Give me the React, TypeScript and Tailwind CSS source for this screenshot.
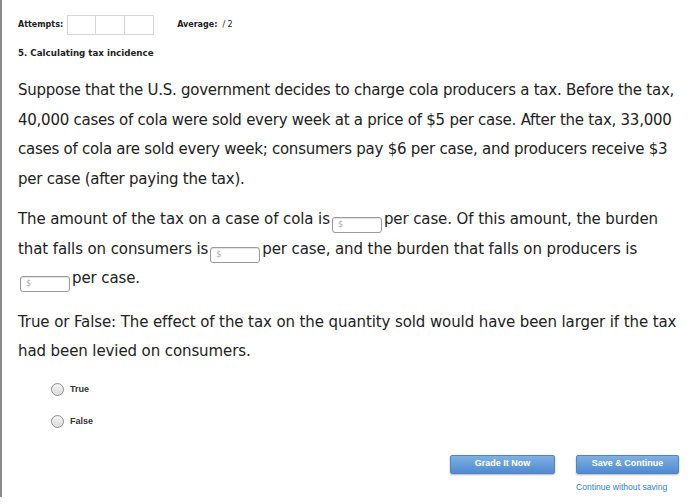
const Blank = () => (
  <span className="mx-[2px] inline-flex h-[16px] w-[50px] items-center rounded-[3px] border border-[#9a9a9a] bg-white pl-[5px] align-[-3px] text-[8px] leading-none tracking-normal text-[#aaa] shadow-[inset_0_1px_1px_rgba(0,0,0,0.12)]">
    $
  </span>
)

const Radio = ({ label }: { label: string }) => (
  <div className="flex items-center gap-[6px]">
    <span className="h-[13px] w-[13px] rounded-full border border-[#8c8c8c] bg-gradient-to-b from-[#f4f4f4] to-[#dcdcdc]" />
    <span className="font-['Liberation_Sans',sans-serif] text-[9px] font-bold text-[#333]">{label}</span>
  </div>
)

export default function App() {
  return (
    <div className="h-[504px] w-[700px] bg-white font-['DejaVu_Sans',sans-serif] text-[#222]">
      <div className="h-[497px] border-l-2 border-[#8a8a8a] pl-[16px] pr-[10px]">
        <div className="flex h-[46px] items-center pt-[3px] text-[8px] font-bold">
          <span>Attempts:</span>
          <div className="ml-[4px] flex">
            <div className="h-[20px] w-[29px] border border-[#d6d6d6]" />
            <div className="h-[20px] w-[29px] border border-l-0 border-[#d6d6d6]" />
            <div className="h-[20px] w-[29px] border border-l-0 border-[#d6d6d6]" />
          </div>
          <span className="ml-[23px]">Average:</span>
          <span className="ml-[5px] font-normal">/ 2</span>
        </div>
        <div className="text-[8.7px] font-bold leading-[14px]">5. Calculating tax incidence</div>

        <p className="mt-[16px] text-[15px] leading-[29.5px] tracking-[-0.25px]">
          Suppose that the U.S. government decides to charge cola producers a tax. Before the tax, 40,000 cases of cola
          were sold every week at a price of $5 per case. After the tax, 33,000 cases of cola are sold every week;
          consumers pay $6 per case, and producers receive $3 per case (after paying the tax).
        </p>

        <p className="mt-[11px] text-[15px] leading-[29.5px] tracking-[-0.1px]">
          The amount of the tax on a case of cola is
          <Blank />
          per case. Of this amount, the burden
          <br />
          that falls on consumers is
          <Blank />
          per case, and the burden that falls on producers is
          <br />
          <Blank />
          per case.
        </p>

        <p className="mt-[14px] text-[15px] leading-[29.5px] tracking-[-0.1px]">
          True or False: The effect of the tax on the quantity sold would have been larger if the tax had been levied on
          consumers.
        </p>

        <div className="mt-[16px] flex flex-col gap-[19px] pl-[33px]">
          <Radio label="True" />
          <Radio label="False" />
        </div>

        <div className="mt-[26px] flex justify-end gap-[21px] pr-[11px] font-['Liberation_Sans',sans-serif]">
          <button className="h-[19px] w-[105px] rounded-[2px] border border-[#4f86c2] bg-gradient-to-b from-[#7fb0e2] to-[#4f8ad0] text-[9px] font-bold text-white shadow-[0_1px_2px_rgba(0,0,0,0.3)]">
            Grade It Now
          </button>
          <div className="flex flex-col items-start">
            <button className="h-[19px] w-[103px] rounded-[2px] border border-[#4f86c2] bg-gradient-to-b from-[#7fb0e2] to-[#4f8ad0] text-[9px] font-bold text-white shadow-[0_1px_2px_rgba(0,0,0,0.3)]">
              Save &amp; Continue
            </button>
            <span className="mt-[7px] text-[8.6px] text-[#2f7fc8]">Continue without saving</span>
          </div>
        </div>
      </div>
    </div>
  )
}
